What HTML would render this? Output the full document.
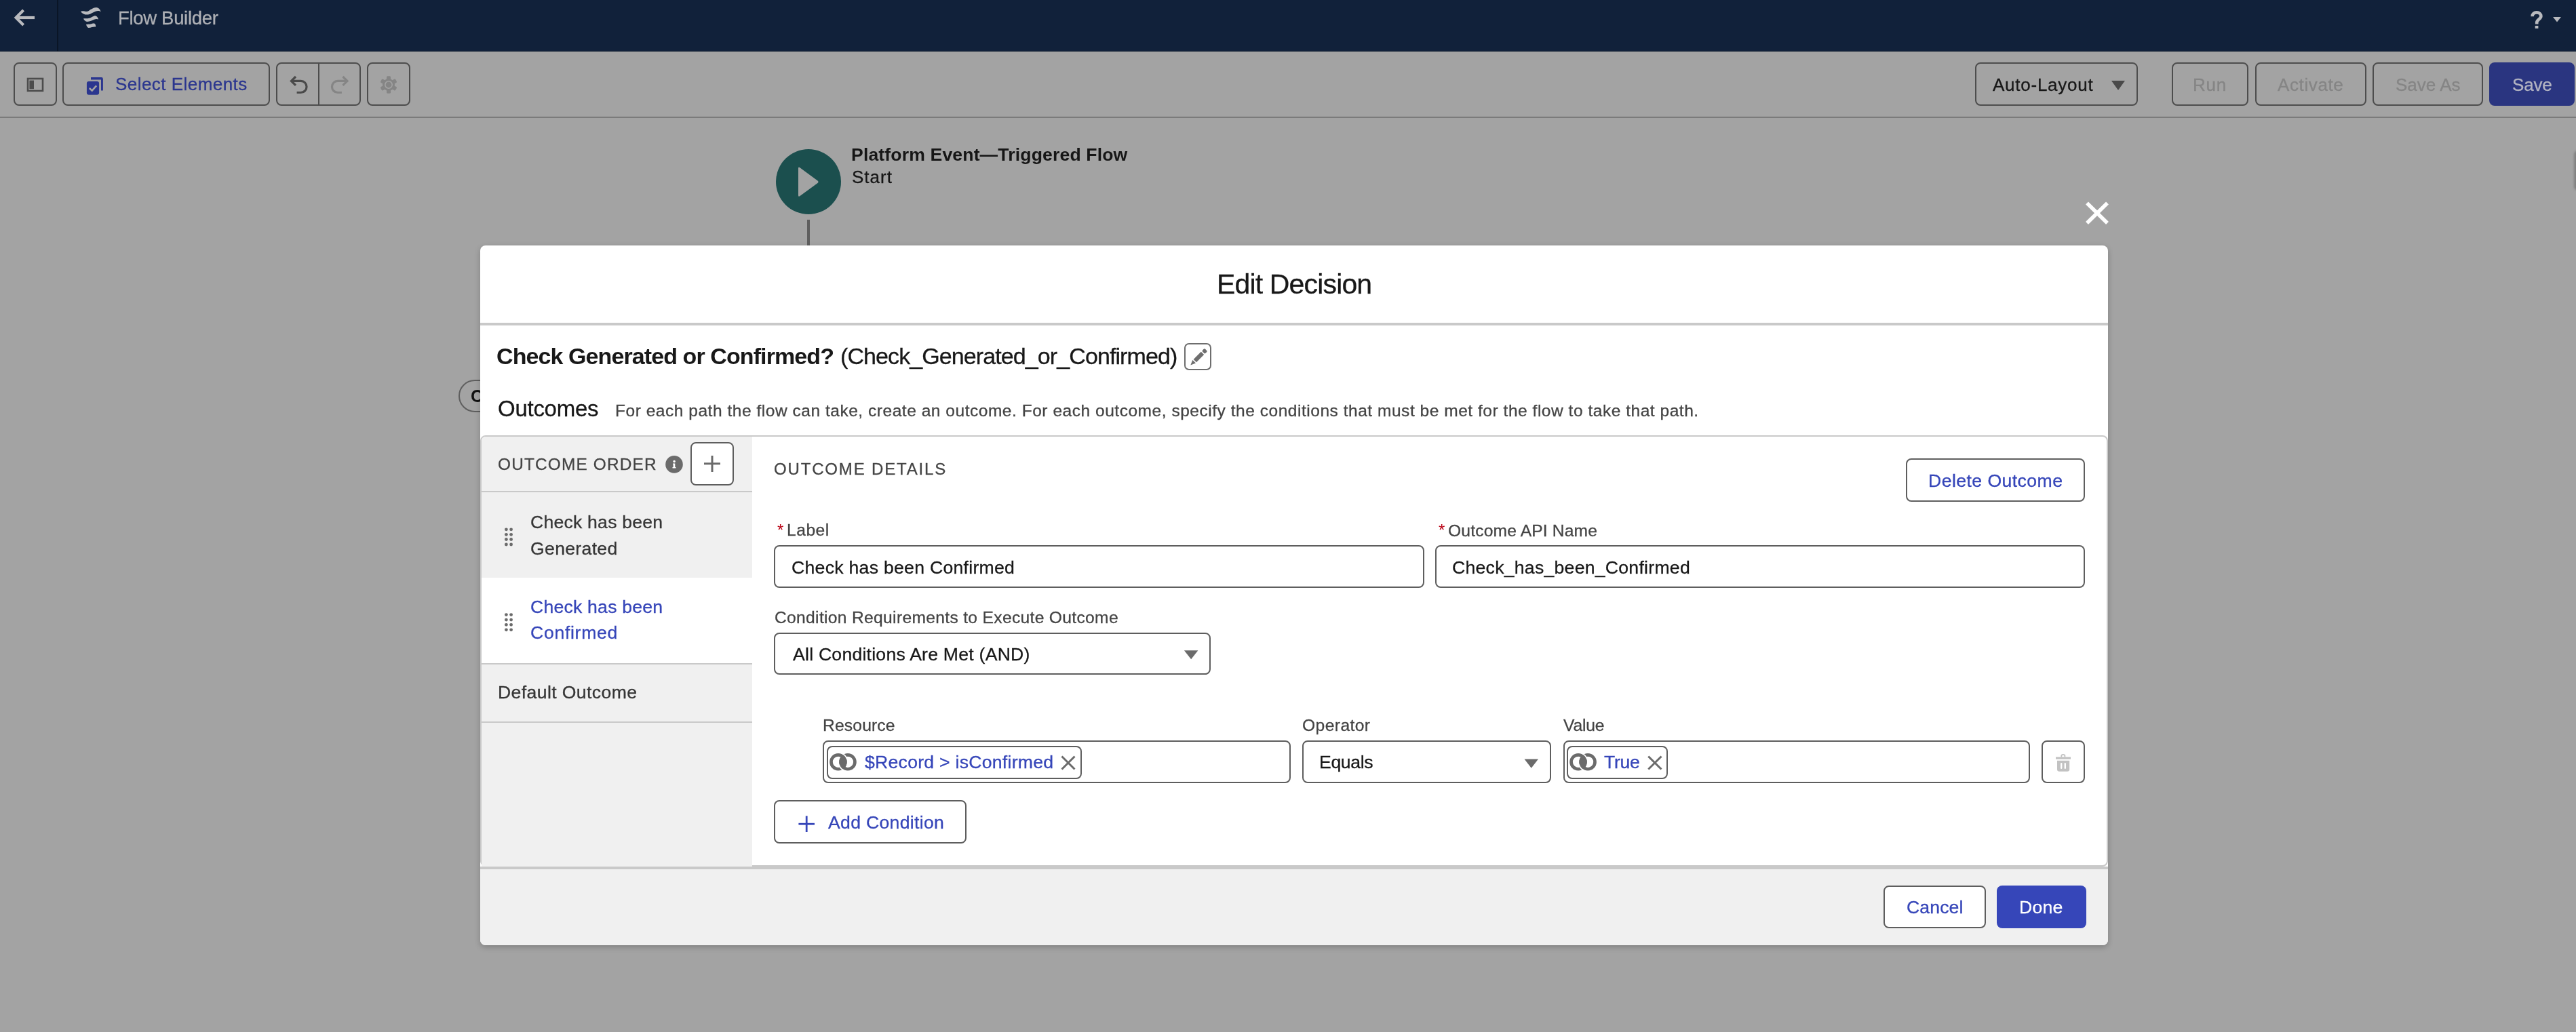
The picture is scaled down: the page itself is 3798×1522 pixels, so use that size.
<!DOCTYPE html><html><head><meta charset="utf-8"><style>
html,body{margin:0;padding:0;width:3798px;height:1522px;overflow:hidden;background:#a3a3a3;}
.t{position:absolute;white-space:pre;font-family:"Liberation Sans",sans-serif;will-change:transform;}
svg{position:absolute;left:0;top:0;}
</style></head><body>
<div style="position:absolute;left:0px;top:0px;width:3798px;height:76px;background:#11213a;"></div>
<div style="position:absolute;left:0px;top:75px;width:3798px;height:1px;background:#0c1a2f;"></div>
<div style="position:absolute;left:84px;top:0px;width:2px;height:76px;background:#0a1526;"></div>
<div class="t" style="left:173.50px;top:12.71px;font-size:27.5px;line-height:27.5px;font-weight:400;color:#aeb0b5;letter-spacing:-0.318px;-webkit-text-stroke:0.3px #aeb0b5;">Flow Builder</div>
<div style="position:absolute;left:0px;top:172px;width:3798px;height:2px;background:#7b7b7b;"></div>
<div style="position:absolute;left:20px;top:92px;width:64px;height:64px;box-sizing:border-box;border:2px solid #4d4d4d;border-radius:8px;"></div>
<div style="position:absolute;left:92px;top:92px;width:306px;height:64px;box-sizing:border-box;border:2px solid #4d4d4d;border-radius:8px;"></div>
<div class="t" style="left:170.00px;top:111.38px;font-size:26px;line-height:26px;font-weight:400;color:#2b368f;letter-spacing:0.457px;-webkit-text-stroke:0.3px #2b368f;">Select Elements</div>
<div style="position:absolute;left:407px;top:92px;width:125px;height:64px;box-sizing:border-box;border:2px solid #4d4d4d;border-radius:8px;"></div>
<div style="position:absolute;left:469px;top:92px;width:2px;height:64px;background:#4d4d4d;"></div>
<div style="position:absolute;left:541px;top:92px;width:64px;height:64px;box-sizing:border-box;border:2px solid #4d4d4d;border-radius:8px;"></div>
<div style="position:absolute;left:2912px;top:92px;width:240px;height:64px;box-sizing:border-box;border:2px solid #4d4d4d;border-radius:8px;"></div>
<div class="t" style="left:2938.30px;top:111.98px;font-size:26px;line-height:26px;font-weight:400;color:#171717;letter-spacing:0.750px;-webkit-text-stroke:0.3px #171717;">Auto-Layout</div>
<div style="position:absolute;left:3202px;top:92px;width:113px;height:64px;box-sizing:border-box;border:2px solid #4d4d4d;border-radius:8px;"></div>
<div class="t" style="left:3233.00px;top:111.98px;font-size:26px;line-height:26px;font-weight:400;color:#858585;letter-spacing:0.800px;-webkit-text-stroke:0.3px #858585;">Run</div>
<div style="position:absolute;left:3325px;top:92px;width:164px;height:64px;box-sizing:border-box;border:2px solid #4d4d4d;border-radius:8px;"></div>
<div class="t" style="left:3358.40px;top:111.98px;font-size:26px;line-height:26px;font-weight:400;color:#858585;letter-spacing:0.614px;-webkit-text-stroke:0.3px #858585;">Activate</div>
<div style="position:absolute;left:3498px;top:92px;width:163px;height:64px;box-sizing:border-box;border:2px solid #4d4d4d;border-radius:8px;"></div>
<div class="t" style="left:3531.70px;top:111.98px;font-size:26px;line-height:26px;font-weight:400;color:#858585;letter-spacing:0.017px;-webkit-text-stroke:0.3px #858585;">Save As</div>
<div style="position:absolute;left:3670px;top:92px;width:126px;height:64px;background:#2a3580;border-radius:8px;"></div>
<div class="t" style="left:3703.60px;top:111.98px;font-size:26px;line-height:26px;font-weight:400;color:#b3b4c2;letter-spacing:-0.200px;-webkit-text-stroke:0.3px #b3b4c2;">Save</div>
<div style="position:absolute;left:1144px;top:220px;width:96px;height:96px;background:#1b4f4e;border-radius:50%;"></div>
<div style="position:absolute;left:1190px;top:324px;width:4px;height:40px;background:#5e5e5e;"></div>
<div class="t" style="left:1254.50px;top:215.48px;font-size:26.6px;line-height:26.6px;font-weight:700;color:#161616;letter-spacing:0.139px;">Platform Event—Triggered Flow</div>
<div class="t" style="left:1255.50px;top:247.58px;font-size:26px;line-height:26px;font-weight:400;color:#161616;letter-spacing:1.025px;-webkit-text-stroke:0.3px #161616;">Start</div>
<div style="position:absolute;left:676px;top:560px;width:120px;height:48px;box-sizing:border-box;border:2px solid #5f5f5f;border-radius:24px;"></div>
<div class="t" style="left:694.00px;top:571.58px;font-size:25.3px;line-height:25.3px;font-weight:700;color:#121212;letter-spacing:0.000px;">C</div>
<div style="position:absolute;left:3795px;top:222px;width:20px;height:59px;background:#808080;border-radius:6px;filter:blur(1.5px);"></div>
<svg width="3798" height="1522" viewBox="0 0 3798 1522">
<g fill="none" stroke="#b9babe" stroke-width="4.2" stroke-linecap="butt" stroke-linejoin="miter">
<path d="M23.5 26 H51"/><path d="M34.6 15 L23.6 26 L34.6 37"/>
</g>
<g fill="#b9babe">
<path d="M118.9 16.9 C121 16, 124 16.2, 126.5 17 C130 17.5, 132 14.5, 135.2 13.2 C138 11.8, 140 10.9, 142 11 C145 11.2, 147.6 13.5, 148.7 17.3 C146 15.6, 143.5 15.9, 141 16.7 C137 17.8, 134 20.9, 130 21.5 C125.5 22.1, 121.5 20.2, 118.9 16.9 Z"/>
<path d="M123 27.4 C125 27, 128 27.5, 130.5 27.1 C134 26.5, 136.5 24, 139 23.4 C141.5 22.9, 144 24.5, 145.2 28.6 C143 27.7, 141 27.9, 139 28.7 C136 29.9, 132.5 31.9, 129 31.9 C126.5 31.9, 124.3 30.3, 123 27.4 Z"/>
<path d="M127 36.1 C129 35.7, 131.5 36, 133.5 35.5 C135.5 35, 137.5 34.2, 139 34.5 C140.6 35.1, 141.3 37, 141.1 39.7 C139.5 39.3, 137.5 39.5, 135.5 40.1 C133.5 40.7, 131.5 41.3, 130 40.9 C128.5 40.3, 127.5 38.3, 127 36.1 Z"/>
</g>
<g fill="#b9babe"><rect x="3737.7" y="38" width="4.7" height="4"/><path d="M3764 25 H3776 L3770 32.6 Z"/></g>
<path d="M3733.6 24.2 C3733.6 20.3 3736.5 18.4 3740 18.4 C3743.8 18.4 3746.4 20.6 3746.4 23.8 C3746.4 28.2 3740.2 28.8 3740.2 33.2 V35.5" fill="none" stroke="#b9babe" stroke-width="4.6"/>
<!-- toolbar icons -->
<rect x="41" y="116" width="22" height="18" fill="none" stroke="#4d4d4d" stroke-width="2.6"/>
<rect x="43.4" y="118.6" width="6.6" height="12.6" fill="#4d4d4d"/>
<path d="M134 117.4 V114 H149.5 Q151.9 114 151.9 116.4 V133.4 H149 V117.4 Z" fill="#2b368f"/>
<rect x="127.9" y="119.9" width="18.2" height="19.8" rx="3" fill="#2b368f"/>
<path d="M131.8 130 L135.7 133.7 L142.2 126.4" fill="none" stroke="#a3a3a3" stroke-width="2.6"/>
<g fill="none" stroke="#4a4a4a" stroke-width="3.2">
<path d="M436 113 L429.5 119.4 L436 125.8"/><path d="M429.5 119.4 H443.5 A8.5 8.5 0 0 1 443.5 136.5 H437.6"/>
</g>
<g fill="none" stroke="#858585" stroke-width="3.2">
<path d="M505.5 113 L512 119.4 L505.5 125.8"/><path d="M512 119.4 H498 A8.5 8.5 0 0 0 498 136.5 H503.9"/>
</g>
<g fill="#858585">
<circle cx="573" cy="125" r="9"/>
<rect x="570" y="112.3" width="6" height="6" rx="1.5"/><rect x="570" y="131.7" width="6" height="6" rx="1.5"/>
<rect x="570" y="112.3" width="6" height="6" rx="1.5" transform="rotate(60 573 125)"/><rect x="570" y="131.7" width="6" height="6" rx="1.5" transform="rotate(60 573 125)"/>
<rect x="570" y="112.3" width="6" height="6" rx="1.5" transform="rotate(120 573 125)"/><rect x="570" y="131.7" width="6" height="6" rx="1.5" transform="rotate(120 573 125)"/>
</g>
<circle cx="573" cy="125" r="5.2" fill="none" stroke="#a3a3a3" stroke-width="1.6"/>
<path d="M3113 119 H3133 L3123 133 Z" fill="#4a4a4a"/>
<!-- play -->
<path d="M1179 247 Q1177 245.5 1177 248.5 V288 Q1177 291 1179.5 289 L1205.5 270 Q1207.5 268 1205.5 266.5 Z" fill="#a3a3a3"/>
<!-- close X -->
<g stroke="#ffffff" stroke-width="5.5"><path d="M3077 299.5 L3107 329"/><path d="M3107 299.5 L3077 329"/></g>
</svg>
<div style="position:absolute;left:708px;top:362px;width:2400px;height:1032px;background:#fff;border-radius:8px;box-shadow:0 3px 8px rgba(0,0,0,0.22);"></div>
<div style="position:absolute;left:708px;top:476px;width:2400px;height:4px;background:#c9c9c9;"></div>
<div class="t" style="left:1793.50px;top:399.28px;font-size:41px;line-height:41px;font-weight:400;color:#181818;letter-spacing:-0.842px;-webkit-text-stroke:0.3px #181818;">Edit Decision</div>
<div class="t" style="left:732.40px;top:507.51px;font-size:34px;line-height:34px;font-weight:700;color:#181818;letter-spacing:-0.907px;">Check Generated or Confirmed?</div>
<div class="t" style="left:1238.70px;top:507.51px;font-size:34px;line-height:34px;font-weight:400;color:#181818;letter-spacing:-0.903px;-webkit-text-stroke:0.3px #181818;">(Check_Generated_or_Confirmed)</div>
<div style="position:absolute;left:1746px;top:506px;width:40px;height:40px;box-sizing:border-box;border:2px solid #6e6e6e;border-radius:7px;"></div>
<div class="t" style="left:734.40px;top:585.96px;font-size:33px;line-height:33px;font-weight:400;color:#181818;letter-spacing:-0.271px;-webkit-text-stroke:0.3px #181818;">Outcomes</div>
<div class="t" style="left:906.90px;top:594.15px;font-size:24.5px;line-height:24.5px;font-weight:400;color:#444444;letter-spacing:0.533px;-webkit-text-stroke:0.3px #444444;">For each path the flow can take, create an outcome. For each outcome, specify the conditions that must be met for the flow to take that path.</div>
<div style="position:absolute;left:708px;top:642px;width:2400px;height:636px;box-sizing:border-box;border:2px solid #c9c9c9;border-radius:8px;background:#fff;overflow:hidden;"></div>
<div style="position:absolute;left:710px;top:644px;width:399px;height:634px;background:#f0f0f0;border-top-left-radius:6px;"></div>
<div style="position:absolute;left:710px;top:724px;width:399px;height:2px;background:#c9c9c9;"></div>
<div style="position:absolute;left:710px;top:852px;width:399px;height:126px;background:#fff;"></div>
<div style="position:absolute;left:710px;top:978px;width:399px;height:2px;background:#c9c9c9;"></div>
<div style="position:absolute;left:710px;top:1064px;width:399px;height:2px;background:#c9c9c9;"></div>
<div class="t" style="left:734.00px;top:672.74px;font-size:24.4px;line-height:24.4px;font-weight:400;color:#444444;letter-spacing:1.167px;-webkit-text-stroke:0.3px #444444;">OUTCOME ORDER</div>
<div style="position:absolute;left:1018px;top:652px;width:64px;height:64px;box-sizing:border-box;border:2px solid #5e5e5e;border-radius:8px;background:#fff;"></div>
<div class="t" style="left:781.60px;top:756.78px;font-size:26.6px;line-height:26.6px;font-weight:400;color:#363636;letter-spacing:0.223px;-webkit-text-stroke:0.3px #363636;">Check has been</div>
<div class="t" style="left:781.60px;top:795.78px;font-size:26.6px;line-height:26.6px;font-weight:400;color:#363636;letter-spacing:0.325px;-webkit-text-stroke:0.3px #363636;">Generated</div>
<div class="t" style="left:781.60px;top:882.18px;font-size:26.6px;line-height:26.6px;font-weight:400;color:#3646b9;letter-spacing:0.223px;-webkit-text-stroke:0.3px #3646b9;">Check has been</div>
<div class="t" style="left:781.60px;top:920.48px;font-size:26.6px;line-height:26.6px;font-weight:400;color:#3646b9;letter-spacing:0.700px;-webkit-text-stroke:0.3px #3646b9;">Confirmed</div>
<div class="t" style="left:733.80px;top:1008.48px;font-size:26.6px;line-height:26.6px;font-weight:400;color:#363636;letter-spacing:0.393px;-webkit-text-stroke:0.3px #363636;">Default Outcome</div>
<div class="t" style="left:1141.30px;top:679.68px;font-size:24.0px;line-height:24.0px;font-weight:400;color:#444444;letter-spacing:1.836px;-webkit-text-stroke:0.3px #444444;">OUTCOME DETAILS</div>
<div style="position:absolute;left:2810px;top:676px;width:264px;height:64px;box-sizing:border-box;border:2px solid #5e5e5e;border-radius:8px;background:#fff;"></div>
<div class="t" style="left:2842.60px;top:695.68px;font-size:26.6px;line-height:26.6px;font-weight:400;color:#3646b9;letter-spacing:0.446px;-webkit-text-stroke:0.3px #3646b9;">Delete Outcome</div>
<div class="t" style="left:1146px;top:770px;font-size:24px;line-height:24px;color:#ba0517">*</div>
<div class="t" style="left:2121px;top:770px;font-size:24px;line-height:24px;color:#ba0517">*</div>
<div class="t" style="left:1159.70px;top:770.17px;font-size:24.6px;line-height:24.6px;font-weight:400;color:#444444;letter-spacing:0.525px;-webkit-text-stroke:0.3px #444444;">Label</div>
<div class="t" style="left:2134.70px;top:770.67px;font-size:24.6px;line-height:24.6px;font-weight:400;color:#444444;letter-spacing:0.173px;-webkit-text-stroke:0.3px #444444;">Outcome API Name</div>
<div style="position:absolute;left:1141px;top:804px;width:959px;height:63px;box-sizing:border-box;border:2px solid #5e5e5e;border-radius:8px;background:#fff;"></div>
<div class="t" style="left:1167.40px;top:823.78px;font-size:26.6px;line-height:26.6px;font-weight:400;color:#181818;letter-spacing:0.287px;-webkit-text-stroke:0.3px #181818;">Check has been Confirmed</div>
<div style="position:absolute;left:2116px;top:804px;width:958px;height:63px;box-sizing:border-box;border:2px solid #5e5e5e;border-radius:8px;background:#fff;"></div>
<div class="t" style="left:2140.90px;top:823.78px;font-size:26.6px;line-height:26.6px;font-weight:400;color:#181818;letter-spacing:0.270px;-webkit-text-stroke:0.3px #181818;">Check_has_been_Confirmed</div>
<div class="t" style="left:1141.50px;top:898.67px;font-size:24.6px;line-height:24.6px;font-weight:400;color:#444444;letter-spacing:0.327px;-webkit-text-stroke:0.3px #444444;">Condition Requirements to Execute Outcome</div>
<div style="position:absolute;left:1141px;top:933px;width:644px;height:62px;box-sizing:border-box;border:2px solid #5e5e5e;border-radius:8px;background:#fff;"></div>
<div class="t" style="left:1168.50px;top:951.58px;font-size:26.6px;line-height:26.6px;font-weight:400;color:#181818;letter-spacing:0.241px;-webkit-text-stroke:0.3px #181818;">All Conditions Are Met (AND)</div>
<div class="t" style="left:1212.75px;top:1058.17px;font-size:24.6px;line-height:24.6px;font-weight:400;color:#444444;letter-spacing:0.179px;-webkit-text-stroke:0.3px #444444;">Resource</div>
<div class="t" style="left:1920.00px;top:1058.17px;font-size:24.6px;line-height:24.6px;font-weight:400;color:#444444;letter-spacing:0.429px;-webkit-text-stroke:0.3px #444444;">Operator</div>
<div class="t" style="left:2305.30px;top:1058.17px;font-size:24.6px;line-height:24.6px;font-weight:400;color:#444444;letter-spacing:-0.150px;-webkit-text-stroke:0.3px #444444;">Value</div>
<div style="position:absolute;left:1213px;top:1092px;width:690px;height:63px;box-sizing:border-box;border:2px solid #5e5e5e;border-radius:8px;background:#fff;"></div>
<div style="position:absolute;left:1219px;top:1099.5px;width:375.5px;height:49.5px;box-sizing:border-box;border:2px solid #5e5e5e;border-radius:8px;background:#fff;"></div>
<div class="t" style="left:1274.80px;top:1111.48px;font-size:26.6px;line-height:26.6px;font-weight:400;color:#3646b9;letter-spacing:0.270px;-webkit-text-stroke:0.3px #3646b9;">$Record &gt; isConfirmed</div>
<div style="position:absolute;left:1920px;top:1092px;width:367px;height:63px;box-sizing:border-box;border:2px solid #5e5e5e;border-radius:8px;background:#fff;"></div>
<div class="t" style="left:1945.30px;top:1110.88px;font-size:26.6px;line-height:26.6px;font-weight:400;color:#181818;letter-spacing:-0.340px;-webkit-text-stroke:0.3px #181818;">Equals</div>
<div style="position:absolute;left:2305px;top:1092px;width:688px;height:63px;box-sizing:border-box;border:2px solid #5e5e5e;border-radius:8px;background:#fff;"></div>
<div style="position:absolute;left:2310px;top:1099.5px;width:149px;height:49.5px;box-sizing:border-box;border:2px solid #5e5e5e;border-radius:8px;background:#fff;"></div>
<div class="t" style="left:2364.70px;top:1111.48px;font-size:26.6px;line-height:26.6px;font-weight:400;color:#3646b9;letter-spacing:-0.333px;-webkit-text-stroke:0.3px #3646b9;">True</div>
<div style="position:absolute;left:3010px;top:1092px;width:64px;height:63px;box-sizing:border-box;border:2px solid #5e5e5e;border-radius:8px;background:#fff;"></div>
<div style="position:absolute;left:1141px;top:1180px;width:284px;height:64px;box-sizing:border-box;border:2px solid #5e5e5e;border-radius:8px;background:#fff;"></div>
<div class="t" style="left:1220.80px;top:1200.28px;font-size:26.6px;line-height:26.6px;font-weight:400;color:#3646b9;letter-spacing:0.317px;-webkit-text-stroke:0.3px #3646b9;">Add Condition</div>
<div style="position:absolute;left:708px;top:1278px;width:2400px;height:116px;background:#f0f0f0;border-bottom-left-radius:8px;border-bottom-right-radius:8px;"></div>
<div style="position:absolute;left:708px;top:1278px;width:2400px;height:4px;background:#c9c9c9;"></div>
<div style="position:absolute;left:2777px;top:1306px;width:151px;height:63px;box-sizing:border-box;border:2px solid #5e5e5e;border-radius:8px;background:#fff;"></div>
<div class="t" style="left:2811.30px;top:1325.48px;font-size:26.6px;line-height:26.6px;font-weight:400;color:#3646b9;letter-spacing:0.120px;-webkit-text-stroke:0.3px #3646b9;">Cancel</div>
<div style="position:absolute;left:2944px;top:1306px;width:132px;height:63px;background:#3646b9;border-radius:8px;"></div>
<div class="t" style="left:2977.40px;top:1325.48px;font-size:26.6px;line-height:26.6px;font-weight:400;color:#ffffff;letter-spacing:0.200px;-webkit-text-stroke:0.3px #ffffff;">Done</div>
<svg width="3798" height="1522" viewBox="0 0 3798 1522">
<!-- pencil -->
<g fill="#6e6e6e" transform="translate(1755.3 538.6) rotate(-45)">
<path d="M0 0 L7.6 -3.3 L7.6 3.3 Z"/>
<rect x="9.2" y="-3.1" width="15.8" height="6.2"/>
<rect x="26.6" y="-3.1" width="5.6" height="6.2" rx="1.6"/>
</g>
<!-- info -->
<circle cx="994" cy="684.9" r="12.8" fill="#6b6b6b"/>
<circle cx="994.1" cy="680.4" r="1.75" fill="#fff"/>
<path d="M992 683.6 H995.3 V688.9 H996.5 V690.4 H991.5 V688.9 H992.6 V685 H992 Z" fill="#fff"/>
<!-- plus in outcome order -->
<g stroke="#6b6b6b" stroke-width="3"><path d="M1038 683.8 H1062"/><path d="M1050 672 V696"/></g>
<circle cx="746.4" cy="780.8" r="2.4" fill="#6b6b6b"/><circle cx="746.4" cy="788.3" r="2.4" fill="#6b6b6b"/><circle cx="746.4" cy="795.5" r="2.4" fill="#6b6b6b"/><circle cx="746.4" cy="803.0" r="2.4" fill="#6b6b6b"/><circle cx="753.6" cy="780.8" r="2.4" fill="#6b6b6b"/><circle cx="753.6" cy="788.3" r="2.4" fill="#6b6b6b"/><circle cx="753.6" cy="795.5" r="2.4" fill="#6b6b6b"/><circle cx="753.6" cy="803.0" r="2.4" fill="#6b6b6b"/><circle cx="746.4" cy="906.6" r="2.4" fill="#6b6b6b"/><circle cx="746.4" cy="914.1" r="2.4" fill="#6b6b6b"/><circle cx="746.4" cy="921.3000000000001" r="2.4" fill="#6b6b6b"/><circle cx="746.4" cy="928.8000000000001" r="2.4" fill="#6b6b6b"/><circle cx="753.6" cy="906.6" r="2.4" fill="#6b6b6b"/><circle cx="753.6" cy="914.1" r="2.4" fill="#6b6b6b"/><circle cx="753.6" cy="921.3000000000001" r="2.4" fill="#6b6b6b"/><circle cx="753.6" cy="928.8000000000001" r="2.4" fill="#6b6b6b"/>
<!-- select triangles -->
<path d="M1745.9 959.3 H1766.4 L1756.15 972.3 Z" fill="#6b6b6b"/>
<path d="M2247.5 1119.4 H2268 L2257.75 1132.8 Z" fill="#6b6b6b"/>
<g>
<circle cx="1235.8999999999999" cy="1123.8" r="10.45" fill="none" stroke="#6b6b6b" stroke-width="4.7"/>
<circle cx="1250.0" cy="1123.8" r="10.45" fill="none" stroke="#6b6b6b" stroke-width="4.7"/>
<path d="M1242.9499999999998 1113.1164846609367 A12.8 12.8 0 0 1 1242.9499999999998 1134.4835153390632 A12.8 12.8 0 0 1 1242.9499999999998 1113.1164846609367 Z" fill="#6b6b6b"/>
<path d="M1242.33 1111.70 A13.700000000000001 13.700000000000001 0 0 1 1248.93 1119.57" fill="none" stroke="#fff" stroke-width="1.8"/>
<path d="M1243.57 1135.90 A13.700000000000001 13.700000000000001 0 0 1 1236.97 1128.03" fill="none" stroke="#fff" stroke-width="1.8"/>
</g><g>
<circle cx="2327.0" cy="1123.8" r="10.45" fill="none" stroke="#6b6b6b" stroke-width="4.7"/>
<circle cx="2341.1" cy="1123.8" r="10.45" fill="none" stroke="#6b6b6b" stroke-width="4.7"/>
<path d="M2334.05 1113.1164846609367 A12.8 12.8 0 0 1 2334.05 1134.4835153390632 A12.8 12.8 0 0 1 2334.05 1113.1164846609367 Z" fill="#6b6b6b"/>
<path d="M2333.43 1111.70 A13.700000000000001 13.700000000000001 0 0 1 2340.03 1119.57" fill="none" stroke="#fff" stroke-width="1.8"/>
<path d="M2334.67 1135.90 A13.700000000000001 13.700000000000001 0 0 1 2328.07 1128.03" fill="none" stroke="#fff" stroke-width="1.8"/>
</g>
<g stroke="#6b6b6b" stroke-width="3"><path d="M1565.5 1115.5 L1584.5 1134.5"/><path d="M1584.5 1115.5 L1565.5 1134.5"/>
<path d="M2430.3 1115.5 L2449.5 1134.5"/><path d="M2449.5 1115.5 L2430.3 1134.5"/></g>
<!-- trash -->
<g fill="#c2c2c2">
<rect x="3031" y="1116.4" width="22" height="3.2"/>
<path d="M3038.4 1116.5 V1114.5 Q3038.4 1112 3041.8 1112 Q3045.3 1112 3045.3 1114.5 V1116.5 H3043.5 V1115 Q3043.5 1113.8 3041.8 1113.8 Q3040.2 1113.8 3040.2 1115 V1116.5 Z"/>
<path d="M3033 1121.8 H3051.2 V1134.5 Q3051.2 1137.7 3048 1137.7 H3036.2 Q3033 1137.7 3033 1134.5 Z"/>
</g>
<g fill="#fff"><rect x="3038" y="1125" width="2.4" height="9" rx="1.2"/><rect x="3043.6" y="1125" width="2.4" height="9" rx="1.2"/></g>
<g stroke="#3646b9" stroke-width="2.8"><path d="M1177.4 1215.2 H1201"/><path d="M1189.2 1203.3 V1227"/></g>
</svg>
</body></html>
